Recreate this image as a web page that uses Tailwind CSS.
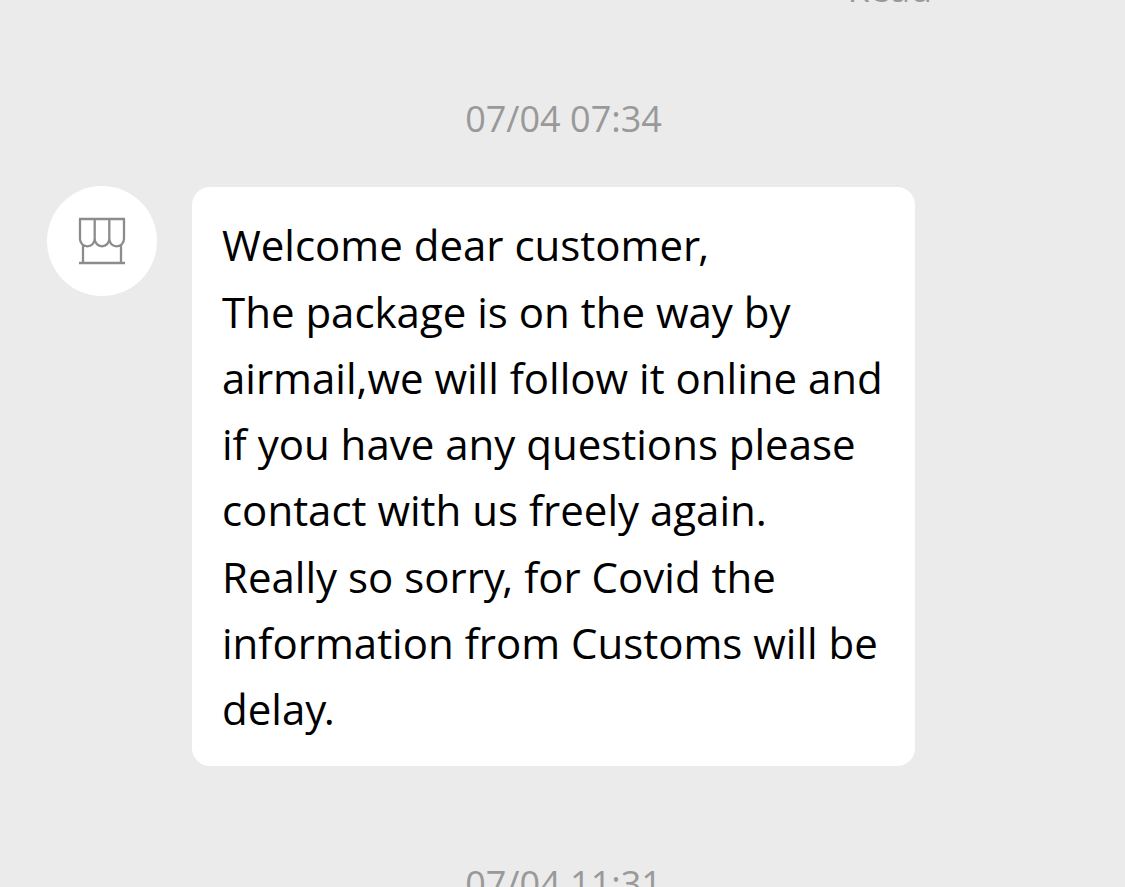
<!DOCTYPE html>
<html lang="en">

<head>
  <meta charset="UTF-8">
  <meta name="viewport" content="width=device-width, initial-scale=1.0">
  <title>Messages</title>

  <!-- Tailwind CSS -->
  <script src="https://cdn.jsdelivr.net/npm/@tailwindcss/browser@4"></script>
</head>

<body class="bg-[#ebebeb] font-['Open_Sans','Noto_Sans',sans-serif] overflow-hidden">
  <div class="h-[887px] overflow-hidden flex flex-col">
    <!-- Read status -->
    <div class="h-[9px] flex items-end justify-end pr-[193px]">
      <span class="text-[36px] leading-[40px] text-[#999999]">Read</span>
    </div>

    <!-- Date -->
    <p class="mt-[85px] pl-[2px] text-center text-[36px] leading-[50px] text-[#999999]">07/04 07:34</p>

    <!-- Message begin -->
    <div class="mt-[43px] flex items-start pl-[47px]">
      <div class="w-[110px] h-[110px] -mt-[1px] shrink-0 rounded-full bg-white flex items-center justify-center">
        <svg class="w-[48px] h-[48px]" fill="none" stroke="#8c8c8c" stroke-width="2.3" viewBox="0 0 48 48"
          xmlns="http://www.w3.org/2000/svg">
          <path d="M1 2h46M2 2v20a7.3 7.3 0 0014.7 0V2M16.7 22a7.3 7.3 0 0014.6 0V2M31.3 22a7.3 7.3 0 0014.7 0V2M5 28v18M43 28v18M1 46h46"></path>
        </svg>
      </div>
      <div class="ml-[35px] w-[723px] h-[579px] rounded-[18px] bg-white pl-[30px] pt-[25.3px] text-[42px] leading-[66.3px] text-black whitespace-nowrap">
        <p>Welcome dear custome<span class="tracking-[-2px]">r</span>,</p>
        <p>The package is on the way by<br>airmail,we will follow it online and<br>if you have any questions please<br>contact with us freely again.</p>
        <p>Really so sorr<span class="tracking-[-2.5px]">y</span>, for Covid the<br>information from Customs will be<br>dela<span class="tracking-[-2.5px]">y</span>.</p>
      </div>
    </div>
    <!-- Message end -->

    <!-- Date -->
    <p class="mt-[93px] pl-[2px] text-center text-[36px] leading-[50px] text-[#999999]">07/04 11:31</p>
  </div>
</body>

</html>
